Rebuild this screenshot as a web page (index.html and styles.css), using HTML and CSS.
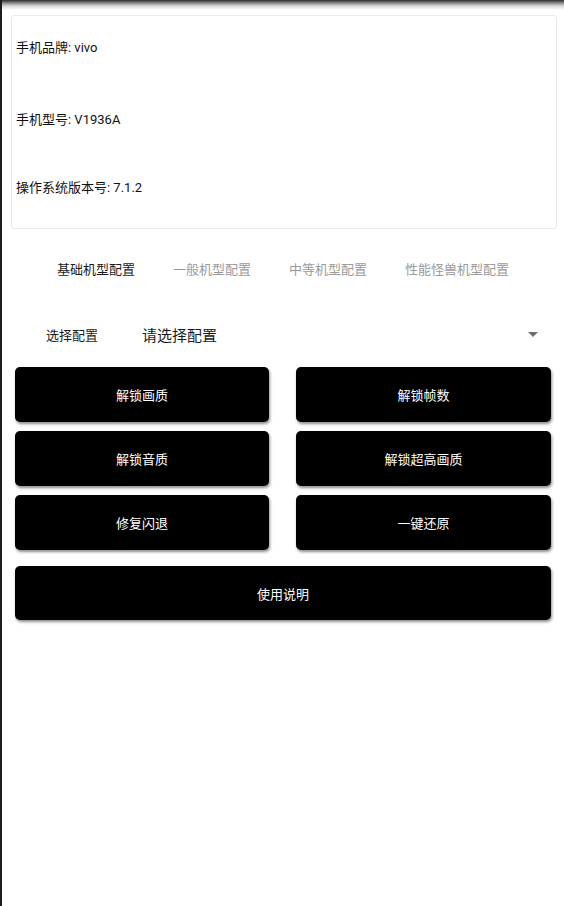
FILE: index.html
```html
<!DOCTYPE html>
<html lang="zh-CN">
<head>
<meta charset="utf-8">
<title>配置</title>
<link rel="stylesheet" href="styles.css">
</head>
<body>
<div class="page">
  <div class="topshade"></div>
  <div class="card">
    <div class="info r1">手机品牌: vivo</div>
    <div class="info r2">手机型号: V1936A</div>
    <div class="info r3">操作系统版本号: 7.1.2</div>
  </div>
  <div class="tabs">
    <span class="tab active">基础机型配置</span>
    <span class="tab">一般机型配置</span>
    <span class="tab">中等机型配置</span>
    <span class="tab">性能怪兽机型配置</span>
  </div>
  <div class="select-row">
    <span class="sel-label">选择配置</span>
    <span class="sel-value">请选择配置</span>
    <span class="sel-arrow"></span>
  </div>
  <div class="buttons">
    <div class="btn">解锁画质</div>
    <div class="btn">解锁帧数</div>
    <div class="btn">解锁音质</div>
    <div class="btn">解锁超高画质</div>
    <div class="btn">修复闪退</div>
    <div class="btn">一键还原</div>
    <div class="btn wide">使用说明</div>
  </div>
</div>
</body>
</html>
```
FILE: styles.css
```css
html, body {
  margin: 0;
  padding: 0;
  background: #fff;
}
body {
  font-family: Roboto, "Noto Sans CJK SC", sans-serif;
  color: #1a1a1a;
}
.page {
  width: 564px;
  height: 906px;
  box-sizing: border-box;
  border-left: 2px solid #1c1c1c;
  overflow: hidden;
}
.topshade {
  height: 10px;
  background: linear-gradient(to bottom, #2a2a2a 0px, #8a8a8a 3px, #d8d8d8 6px, #fff 10px);
}
.card {
  margin: 5px 7px 0 9px;
  height: 214px;
  box-sizing: border-box;
  border: 1px solid #e9e9e9;
  border-radius: 3px;
  padding: 22px 0 0 4px;
  display: flex;
  flex-direction: column;
}
.info {
  font-size: 13px;
  line-height: 20px;
  height: 20px;
  color: #111;
}
.r2 { margin-top: 52px; }
.r3 { margin-top: 48px; }
.tabs {
  margin-top: 31px;
  padding-left: 55px;
  display: flex;
  gap: 38px;
  font-size: 13px;
  line-height: 20px;
}
.tab { color: #9a9a9a; }
.tab.active { color: #1a1a1a; }
.select-row {
  margin-top: 44px;
  height: 20px;
  display: flex;
  align-items: center;
  position: relative;
}
.sel-label {
  margin-left: 44px;
  font-size: 13px;
  color: #1a1a1a;
}
.sel-value {
  margin-left: 44px;
  font-size: 15px;
  color: #1a1a1a;
}
.sel-arrow {
  margin-left: auto;
  margin-right: 26px;
  width: 0;
  height: 0;
  border-left: 5px solid transparent;
  border-right: 5px solid transparent;
  border-top: 5px solid #707070;
}
.buttons {
  margin: 23px 13px 0 13px;
  display: grid;
  grid-template-columns: 254px 255px;
  column-gap: 27px;
  row-gap: 9px;
}
.btn {
  height: 55px;
  background: #000;
  color: #fff;
  border-radius: 5px;
  box-shadow: 1px 2px 3px rgba(0, 0, 0, 0.45);
  display: flex;
  align-items: center;
  justify-content: center;
  font-size: 13px;
}
.btn.wide {
  grid-column: 1 / 3;
  height: 54px;
  margin-top: 7px;
}
```
